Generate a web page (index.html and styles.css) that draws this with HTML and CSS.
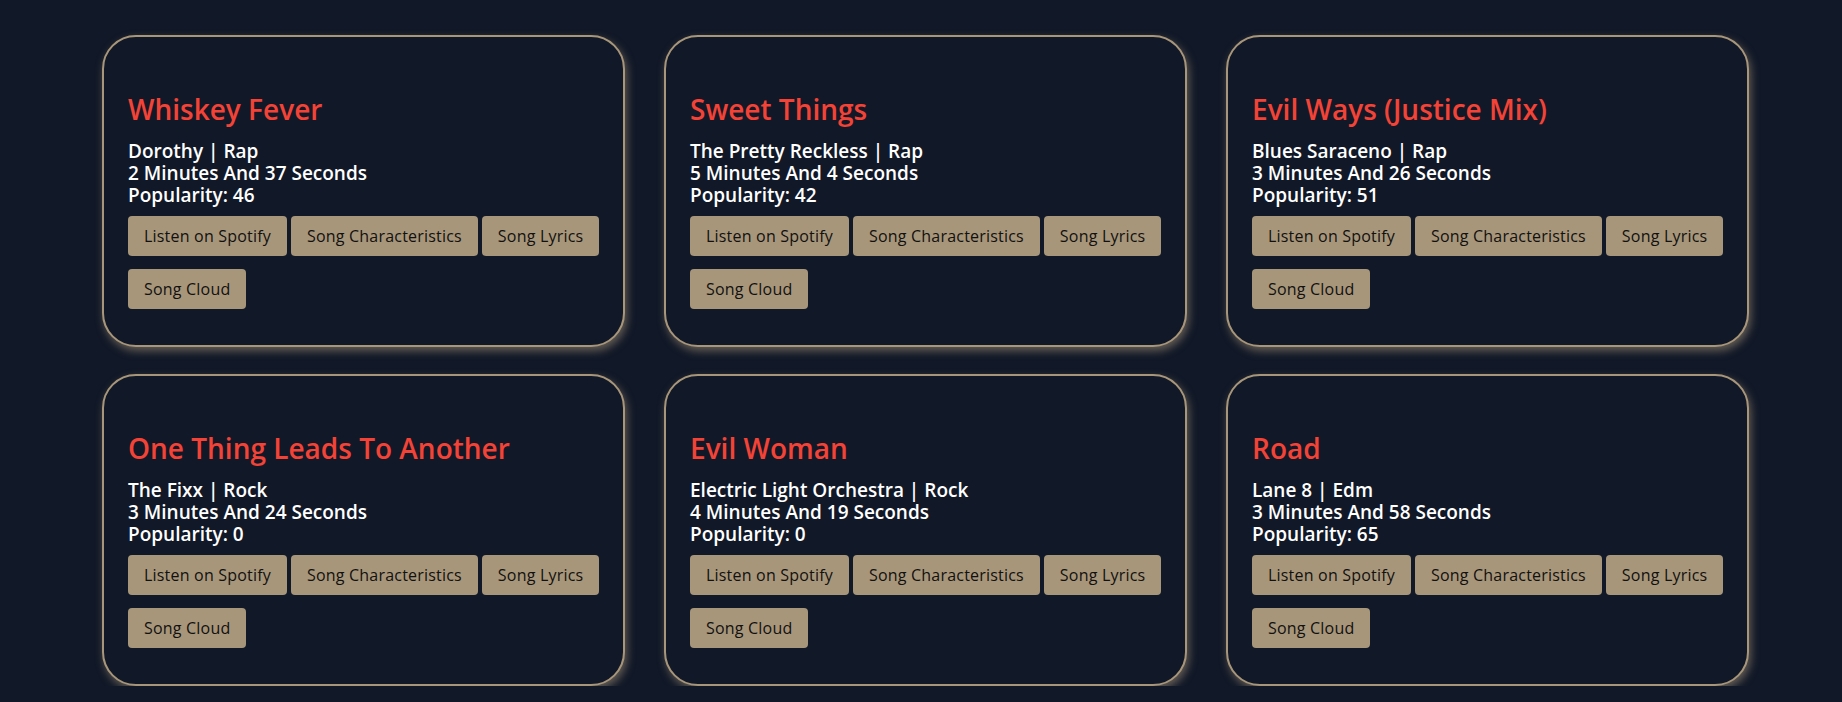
FILE: index.html
```html
<!DOCTYPE html>
<html lang="en">
<head>
<meta charset="utf-8">
<title>Songs</title>
<link rel="stylesheet" href="styles.css">
</head>
<body>
<main class="grid">
  <article class="card">
    <h2 class="title">Whiskey Fever</h2>
    <div class="info">
      <p>Dorothy | Rap</p>
      <p>2 Minutes And 37 Seconds</p>
      <p>Popularity: 46</p>
    </div>
    <div class="actions">
      <button class="btn">Listen on Spotify</button>
      <button class="btn">Song Characteristics</button>
      <button class="btn">Song Lyrics</button>
      <button class="btn">Song Cloud</button>
    </div>
  </article>
  <article class="card">
    <h2 class="title">Sweet Things</h2>
    <div class="info">
      <p>The Pretty Reckless | Rap</p>
      <p>5 Minutes And 4 Seconds</p>
      <p>Popularity: 42</p>
    </div>
    <div class="actions">
      <button class="btn">Listen on Spotify</button>
      <button class="btn">Song Characteristics</button>
      <button class="btn">Song Lyrics</button>
      <button class="btn">Song Cloud</button>
    </div>
  </article>
  <article class="card">
    <h2 class="title">Evil Ways (Justice Mix)</h2>
    <div class="info">
      <p>Blues Saraceno | Rap</p>
      <p>3 Minutes And 26 Seconds</p>
      <p>Popularity: 51</p>
    </div>
    <div class="actions">
      <button class="btn">Listen on Spotify</button>
      <button class="btn">Song Characteristics</button>
      <button class="btn">Song Lyrics</button>
      <button class="btn">Song Cloud</button>
    </div>
  </article>
  <article class="card">
    <h2 class="title">One Thing Leads To Another</h2>
    <div class="info">
      <p>The Fixx | Rock</p>
      <p>3 Minutes And 24 Seconds</p>
      <p>Popularity: 0</p>
    </div>
    <div class="actions">
      <button class="btn">Listen on Spotify</button>
      <button class="btn">Song Characteristics</button>
      <button class="btn">Song Lyrics</button>
      <button class="btn">Song Cloud</button>
    </div>
  </article>
  <article class="card">
    <h2 class="title">Evil Woman</h2>
    <div class="info">
      <p>Electric Light Orchestra | Rock</p>
      <p>4 Minutes And 19 Seconds</p>
      <p>Popularity: 0</p>
    </div>
    <div class="actions">
      <button class="btn">Listen on Spotify</button>
      <button class="btn">Song Characteristics</button>
      <button class="btn">Song Lyrics</button>
      <button class="btn">Song Cloud</button>
    </div>
  </article>
  <article class="card">
    <h2 class="title">Road</h2>
    <div class="info">
      <p>Lane 8 | Edm</p>
      <p>3 Minutes And 58 Seconds</p>
      <p>Popularity: 65</p>
    </div>
    <div class="actions">
      <button class="btn">Listen on Spotify</button>
      <button class="btn">Song Characteristics</button>
      <button class="btn">Song Lyrics</button>
      <button class="btn">Song Cloud</button>
    </div>
  </article>
</main>
</body>
</html>
```
FILE: styles.css
```css
html, body {
  margin: 0;
  padding: 0;
  background: #111827;
  font-family: "Open Sans", "Noto Sans", sans-serif;
}

.grid {
  display: grid;
  grid-template-columns: repeat(3, 523px);
  column-gap: 39px;
  row-gap: 27px;
  padding: 35px 0 0 102px;
}

.card {
  box-sizing: border-box;
  height: 312px;
  border: 2px solid #a8967a;
  border-radius: 34px;
  background: #111827;
  box-shadow: 2px 4px 8px rgba(168, 150, 122, 0.55);
  padding: 54px 12px 36px 24px;
}

.title {
  margin: 0 0 13px;
  font-size: 28px;
  line-height: 36px;
  font-weight: 600;
  color: #f44336;
}

.info p {
  margin: 0;
  font-size: 19px;
  line-height: 22px;
  font-weight: 600;
  color: #ffffff;
}

.actions {
  display: flex;
  flex-wrap: wrap;
  column-gap: 4px;
  row-gap: 13px;
  margin-top: 10px;
}

.btn {
  font-family: inherit;
  font-size: 16px;
  letter-spacing: 0.2px;
  line-height: 24px;
  padding: 8px 16px;
  border: 0;
  border-radius: 4px;
  background: #a8967a;
  color: #111111;
  cursor: pointer;
}
```
